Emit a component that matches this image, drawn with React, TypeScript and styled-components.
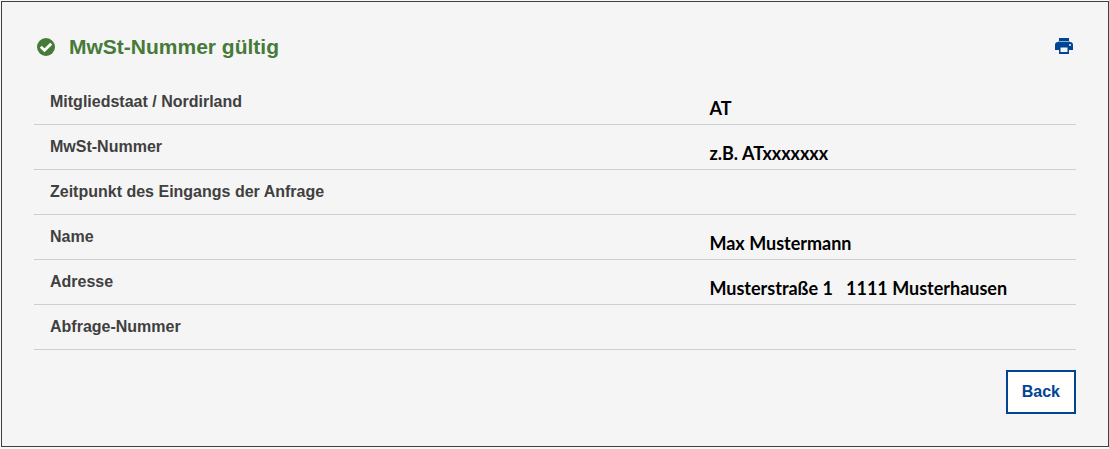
import React from "react";
import styled, { createGlobalStyle } from "styled-components";

const GlobalStyle = createGlobalStyle`
  * { box-sizing: border-box; }
  body {
    margin: 0;
    background: #f8f8f8;
    color: #404040;
    font-family: "Liberation Sans", Arial, sans-serif;
    font-size: 16px;
    line-height: 24px;
  }
`;

const Panel = styled.main`
  margin: 1px 0 2px 1px;
  padding: 32px;
  border: 1px solid #404040;
  background: #f5f5f5;
`;

const Header = styled.header`
  display: flex;
  align-items: center;
  justify-content: space-between;
  margin-bottom: 20px;
  padding: 0 3px;
`;

const Title = styled.h1`
  display: flex;
  align-items: center;
  gap: 14px;
  margin: 0;
  color: #467a39;
  font-size: 21px;
  line-height: 26px;
`;

const PrintButton = styled.button`
  display: flex;
  padding: 0 0 2px;
  border: 0;
  background: none;
  color: #004494;
  cursor: pointer;
`;

const Details = styled.table`
  width: 100%;
  border-collapse: separate;
  border-spacing: 0;
  table-layout: fixed;
`;

const Label = styled.th`
  width: 63%;
  height: 45px;
  padding: 0 16px;
  border-bottom: 1px solid #cfcfcf;
  text-align: left;
`;

const Value = styled.td`
  padding: 12px 0 0 19px;
  border-bottom: 1px solid #cfcfcf;
  color: #000;
  font-family: Lato, sans-serif;
  font-size: 18px;
  font-weight: 700;
  white-space: pre;
`;

const Actions = styled.footer`
  display: flex;
  justify-content: flex-end;
  margin-top: 20px;
`;

const BackButton = styled.button`
  padding: 8px 14px;
  border: 2px solid #004494;
  background: #fff;
  color: #004494;
  font: inherit;
  font-weight: 700;
  cursor: pointer;
`;

const CheckIcon = () => (
  <svg width="18" height="18" viewBox="0 0 18 18" aria-hidden="true">
    <circle cx="9" cy="9" r="9" fill="currentColor" />
    <path d="M3.8 8.8 7.5 12.3 14.2 5.8" fill="none" stroke="#fff" strokeWidth="2.9" />
  </svg>
);

const PrintIcon = () => (
  <svg width="18" height="16" viewBox="0 0 18 16" aria-hidden="true">
    <path d="M4 0h10v3H4z" fill="currentColor" />
    <path d="M3 3h12v1H3z" fill="currentColor" opacity="0.4" />
    <path
      fillRule="evenodd"
      d="M3 4h12a3 3 0 0 1 3 3v5h-4v4H4v-4H0V7a3 3 0 0 1 3-3zM5.5 9.5V14h7V9.5z M15 6a1 1 0 1 0 0 2 1 1 0 0 0 0-2z"
      fill="currentColor"
    />
  </svg>
);

const rows = [
  { label: "Mitgliedstaat / Nordirland", value: "AT" },
  { label: "MwSt-Nummer", value: "z.B. ATxxxxxxx" },
  { label: "Zeitpunkt des Eingangs der Anfrage", value: "" },
  { label: "Name", value: "Max Mustermann" },
  { label: "Adresse", value: "Musterstraße 1   1111 Musterhausen" },
  { label: "Abfrage-Nummer", value: "" },
];

export default function App() {
  return (
    <>
      <GlobalStyle />
      <Panel>
        <Header>
          <Title>
            <CheckIcon />
            MwSt-Nummer gültig
          </Title>
          <PrintButton type="button" aria-label="Drucken" onClick={() => window.print()}>
            <PrintIcon />
          </PrintButton>
        </Header>
        <Details>
          <tbody>
            {rows.map(({ label, value }) => (
              <tr key={label}>
                <Label scope="row">{label}</Label>
                <Value>{value}</Value>
              </tr>
            ))}
          </tbody>
        </Details>
        <Actions>
          <BackButton type="button">Back</BackButton>
        </Actions>
      </Panel>
    </>
  );
}
